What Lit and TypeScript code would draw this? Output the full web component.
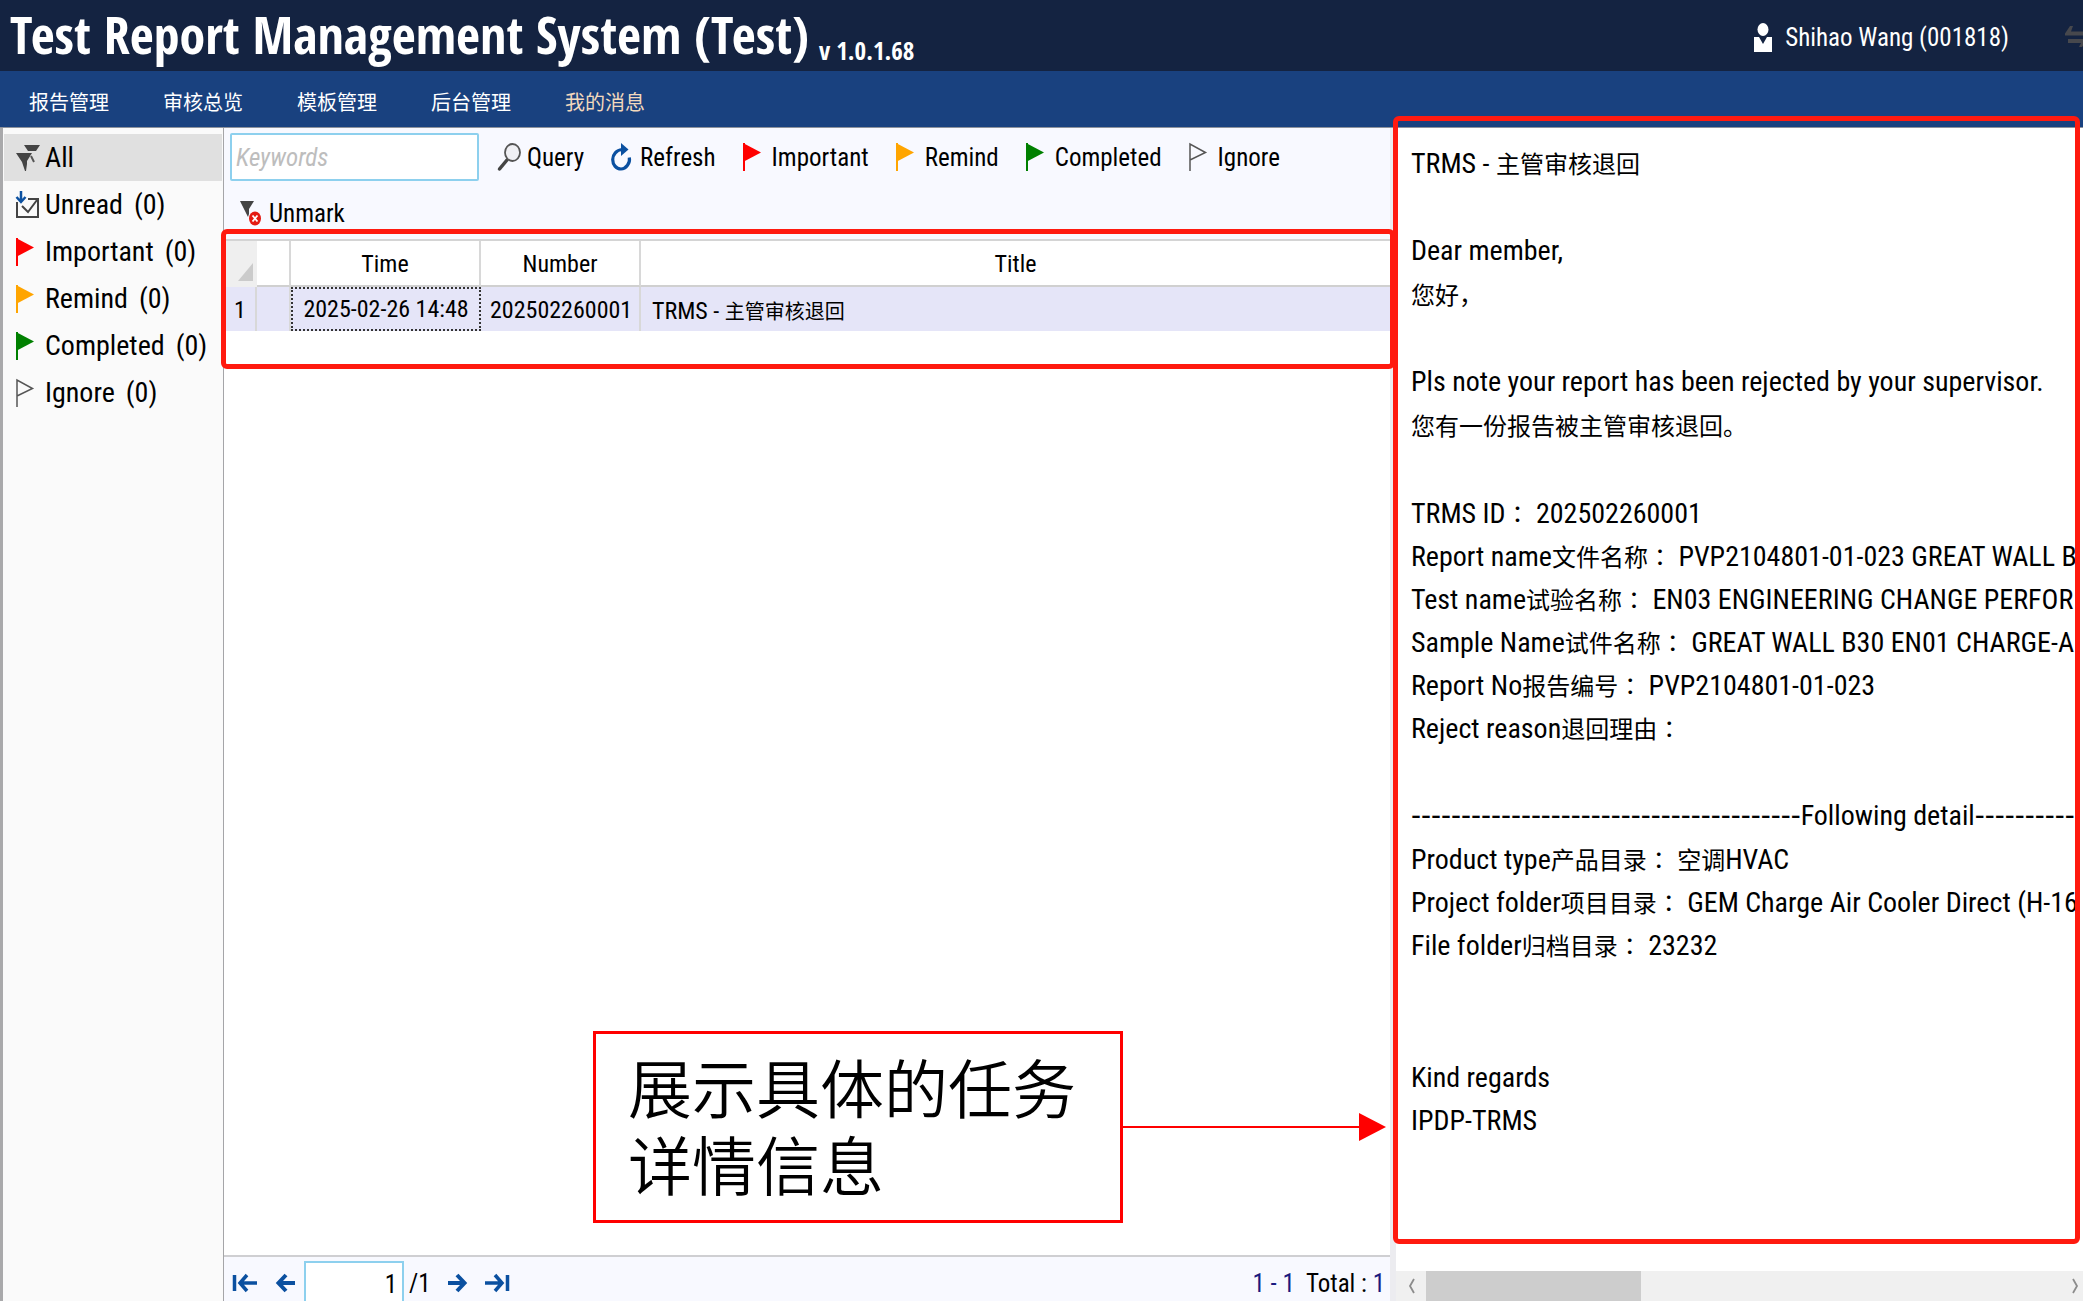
import { LitElement, html, css, svg, nothing, type TemplateResult } from "lit";
import { customElement, property } from "lit/decorators.js";
import { classMap } from "lit/directives/class-map.js";

/** Sets runs of Chinese at their own, smaller size beside the Latin text. */
const mixed = (text: string) =>
  text
    .split(/([\u3000-\u9fff，。]+|：)/)
    .filter((part) => part !== "")
    .map((part) =>
      part === "："
        ? html`<span class="zh colon">：</span>`
        : /[\u3000-\u9fff，。]/.test(part)
          ? html`<span class="zh">${part}</span>`
          : part
    );

const flag = (fill: string) => svg`
  <path d="M1 0v28" stroke=${fill} stroke-width="2" fill="none"/>
  <path d="M0 0l18 9.500L0 19z" fill=${fill}/>`;

const icons: Record<string, { w: number; h: number; body: TemplateResult | unknown }> = {
  all: {
    w: 24, h: 26,
    body: svg`<path d="M8 0h16l-4 6H12z" fill="#444"/>
      <path d="M0 8h16l-5 8v3l-1 7H9L6 17z" fill="#444"/>
      <path d="M15 11l3 6" stroke="#555" stroke-width="2" fill="none"/>`,
  },
  unread: {
    w: 24, h: 28,
    body: svg`<path d="M1 11v15h21V8H12" fill="none" stroke="#444" stroke-width="2"/>
      <path d="M6 15l6 6L21 9" fill="none" stroke="#444" stroke-width="2"/>
      <path d="M5 0v9M0.500 6L5 11l4.500-5" fill="none" stroke="#0b50a0" stroke-width="2.500"/>`,
  },
  important: { w: 18, h: 28, body: flag("#ff0000") },
  remind: { w: 18, h: 28, body: flag("#ffa500") },
  completed: { w: 18, h: 28, body: flag("#008000") },
  ignore: {
    w: 18, h: 28,
    body: svg`<path d="M1 28V1l15.500 8.500L1 17" fill="none" stroke="#555" stroke-width="1.500"/>`,
  },
  query: {
    w: 23, h: 28,
    body: svg`<path d="M9 17L1.500 26" stroke="#444" stroke-width="3.500" stroke-linecap="round"/>
      <ellipse cx="14.500" cy="9.500" rx="7.500" ry="8.500" fill="#f0f0f4" stroke="#555" stroke-width="1.800"/>`,
  },
  refresh: {
    w: 21, h: 28,
    body: svg`<path d="M18.300 14.500C19.500 20 15 26 10 26S1.700 21.500 1.700 16.500 5.500 7 11 6.500" fill="none" stroke="#0b50a0" stroke-width="3.200"/>
      <path d="M10 0l7.500 6.500L10 13z" fill="#0b50a0"/>`,
  },
  unmark: {
    w: 21, h: 25,
    body: svg`<path d="M0 0h14L9 8v5l-1 3L5 10z" fill="#444"/>
      <ellipse cx="15" cy="17.500" rx="6" ry="7" fill="#e41b13"/>
      <path d="M12.500 14.500l5 6M17.500 14.500l-5 6" stroke="#fff" stroke-width="1.800"/>`,
  },
  user: {
    w: 20, h: 29,
    body: svg`<ellipse cx="10" cy="6.500" rx="5.500" ry="6.500" fill="#fff"/>
      <path d="M1 14h5l4 7 4-7h5v15H1z" fill="#fff"/>`,
  },
  swap: {
    w: 26, h: 22,
    body: svg`<path d="M0 7.500L5 0h3L6 5.500h18v4H0z" fill="#47484d"/>
      <path d="M3 13h20l-6 8h-3l2-4H3z" fill="#47484d"/>`,
  },
  first: {
    w: 24, h: 18,
    body: svg`<path d="M1.500 1v16M24 9H8M14 1L7 9l7 8" fill="none" stroke="#0b50a0" stroke-width="3.500"/>`,
  },
  prev: {
    w: 19, h: 18,
    body: svg`<path d="M19 9H3M10 1L2.500 9l7.500 8" fill="none" stroke="#0b50a0" stroke-width="4"/>`,
  },
  next: {
    w: 19, h: 18,
    body: svg`<path d="M0 9h16M9 1l7.500 8L9 17" fill="none" stroke="#0b50a0" stroke-width="4"/>`,
  },
  last: {
    w: 24, h: 18,
    body: svg`<path d="M22.500 1v16M0 9h16M10 1l7 8-7 8" fill="none" stroke="#0b50a0" stroke-width="3.500"/>`,
  },
  left: {
    w: 8, h: 16,
    body: svg`<path d="M6 1L2 8l4 7" fill="none" stroke="#8c8c8c" stroke-width="1.800"/>`,
  },
  right: {
    w: 8, h: 16,
    body: svg`<path d="M2 1l4 7-4 7" fill="none" stroke="#8c8c8c" stroke-width="1.800"/>`,
  },
};

const icon = (name: string) => {
  const i = icons[name];
  return html`<svg class="icon" width=${i.w} height=${i.h} viewBox="0 0 ${i.w} ${i.h}" aria-hidden="true">${i.body}</svg>`;
};

const shared = css`
  * { box-sizing: border-box; }
  :host {
    font-family: "Roboto Condensed", "Noto Sans CJK SC", "Noto Sans", sans-serif;
    color: #000;
  }
  button, input { font: inherit; color: inherit; margin: 0; }
  button { background: none; border: 0; padding: 0; text-align: left; white-space: nowrap; cursor: pointer; }
  .icon { display: block; flex: none; overflow: visible; }
  .zh { font-family: "Noto Sans CJK SC", sans-serif; }
  .colon { font-family: "Noto Sans CJK TC", sans-serif; }
`;

@customElement("trms-header")
class TrmsHeader extends LitElement {
  static styles = [shared, css`
    :host { display: block; color: #fff; }
    .bar {
      display: flex; align-items: center; justify-content: space-between;
      height: 71px; padding-left: 10px; background: #142341; overflow: hidden;
    }
    .brand { display: flex; align-items: flex-end; gap: 10px; padding-bottom: 4px; }
    h1 {
      margin: 0; font: bold 52px/64px "Open Sans Condensed", "Roboto Condensed", sans-serif;
      white-space: nowrap;
    }
    .version { font: bold 25px/32px "Open Sans Condensed", "Roboto Condensed", sans-serif; }
    .account { display: flex; align-items: center; padding-top: 3px; font-size: 25px; }
    .account .name { margin: 0 56px 0 12px; white-space: nowrap; }
    .swap { width: 18px; overflow: hidden; }
    nav { display: flex; gap: 54px; height: 57px; padding-left: 29px; background: #19417f; border-bottom: 1px solid #8d929c; }
    nav a { color: #fff; text-decoration: none; font-size: 20px; line-height: 62px; white-space: nowrap; }
    nav a.current { color: #f3d9bd; }
  `];
  render() {
    const items = ["报告管理", "审核总览", "模板管理", "后台管理", "我的消息"];
    return html`
      <header class="bar">
        <div class="brand"><h1>Test Report Management System (Test)</h1><span class="version">v 1.0.1.68</span></div>
        <div class="account">
          ${icon("user")}<span class="name">Shihao Wang (001818)</span>
          <button class="swap" aria-label="Switch user">${icon("swap")}</button>
        </div>
      </header>
      <nav>${items.map((t, i) => html`<a href="#" class=${classMap({ zh: true, current: i === 4 })}>${t}</a>`)}</nav>`;
  }
}

@customElement("trms-folders")
class TrmsFolders extends LitElement {
  static styles = [shared, css`
    :host {
      display: block; background: #fafafa; padding: 6px 1px 0;
      border-left: 3px solid #a9a9ab; border-right: 1px solid #a5a5a8;
    }
    ul { margin: 0; padding: 0; list-style: none; }
    button {
      display: flex; align-items: center; width: 100%; height: 47px;
      padding-left: 12px; font-size: 28px;
    }
    button.active { background: #e0e0e0; }
    .slot { width: 29px; flex: none; }
    .count { margin-left: 11px; }
  `];
  render() {
    const rows = [
      ["all", "All"], ["unread", "Unread", "(0)"], ["important", "Important", "(0)"],
      ["remind", "Remind", "(0)"], ["completed", "Completed", "(0)"], ["ignore", "Ignore", "(0)"],
    ];
    return html`<ul>${rows.map(([k, t, n], i) => html`
      <li><button class=${classMap({ active: i === 0 })}><span class="slot">${icon(k)}</span><span>${t}</span>${n ? html`<span class="count">${n}</span>` : nothing}</button></li>`)}</ul>`;
  }
}

@customElement("trms-toolbar")
class TrmsToolbar extends LitElement {
  static styles = [shared, css`
    :host {
      display: flex; flex-wrap: wrap; align-items: center; column-gap: 27px; row-gap: 8px;
      height: 111px; padding: 5px 0 0 6px; background: #f8f9ff; align-content: flex-start;
    }
    input {
      width: 249px; height: 48px; padding: 0 4px; margin-right: -8px; font-size: 25px;
      border: 2px solid #8dd0ee; border-radius: 2px; background: #fff; outline: none;
    }
    input::placeholder { color: #bdbdbd; font-style: italic; }
    button { display: flex; align-items: center; font-size: 25px; height: 48px; }
    .slot { width: 29px; flex: none; }
    .second { margin-left: 10px; }
  `];
  render() {
    const actions = [
      ["query", "Query"], ["refresh", "Refresh"], ["important", "Important"], ["remind", "Remind"],
      ["completed", "Completed"], ["ignore", "Ignore"], ["unmark", "Unmark"],
    ];
    return html`
      <input type="text" placeholder="Keywords" aria-label="Keywords" />
      ${actions.map(([k, t]) => html`
        <button class=${classMap({ second: k === "unmark" })}><span class="slot">${icon(k)}</span>${t}</button>`)}`;
  }
}

@customElement("trms-table")
class TrmsTable extends LitElement {
  static styles = [shared, css`
    :host { display: block; background: #fff; font-size: 24px; }
    table { width: 100%; border-collapse: separate; border-spacing: 0; table-layout: fixed; border-top: 2px solid #d4d4d4; }
    th, td { padding: 0; overflow: hidden; white-space: nowrap; border-right: 2px solid #d8d8d8; }
    th:last-child, td:last-child { border-right: 0; }
    th { height: 46px; padding-top: 2px; font-weight: normal; border-bottom: 2px solid #d0d0d0; }
    th.corner { background: #efefef; border: 0; vertical-align: bottom; }
    .corner svg { display: block; margin: 0 4px 6px auto; }
    td { height: 44px; background: #e5e5f8; padding: 2px 0 0 9px; }
    td.index { padding-left: 10px; }
    td.focus { border: 2px dotted #333; text-align: center; padding: 0; }
    td:last-child { padding-left: 11px; }
    .c0 { width: 33px; } .c1 { width: 34px; } .c2 { width: 190px; } .c3 { width: 160px; }
    .zh { font-size: 20px; }
  `];
  render() {
    return html`<table>
      <colgroup><col class="c0" /><col class="c1" /><col class="c2" /><col class="c3" /><col /></colgroup>
      <thead><tr>
        <th class="corner" aria-label="Select all"><svg width="15" height="18" viewBox="0 0 15 18"><path d="M15 0v18H0z" fill="#cbcbcb"/></svg></th>
        <th aria-label="Mark"></th><th>Time</th><th>Number</th><th>Title</th>
      </tr></thead>
      <tbody><tr>
        <td class="index">1</td><td></td><td class="focus">2025-02-26 14:48</td>
        <td>202502260001</td><td>${mixed("TRMS - 主管审核退回")}</td>
      </tr></tbody>
    </table>`;
  }
}

@customElement("trms-pager")
class TrmsPager extends LitElement {
  static styles = [shared, css`
    :host {
      display: flex; align-items: flex-start; height: 46px; padding: 4px 5px 0 9px;
      background: #f8f9ff; border-top: 2px solid #cfcfd2; font-size: 25px; line-height: 46px; overflow: hidden;
    }
    button { display: flex; align-items: center; height: 44px; }
    .prev { margin-left: 19px; }
    .next { margin-left: 17px; }
    .last { margin-left: 18px; }
    input {
      width: 100px; height: 50px; margin: 0 5px 0 9px; padding: 0 5px 4px 0; text-align: right;
      border: 2px solid #8dd0ee; background: #fff; outline: none;
    }
    .total { margin-left: auto; white-space: pre; }
    .num { color: #1a1a80; }
  `];
  render() {
    return html`
      <button aria-label="First page">${icon("first")}</button>
      <button class="prev" aria-label="Previous page">${icon("prev")}</button>
      <input type="text" .value=${"1"} aria-label="Page" /><span>/1</span>
      <button class="next" aria-label="Next page">${icon("next")}</button>
      <button class="last" aria-label="Last page">${icon("last")}</button>
      <span class="total"><span class="num">1 - 1</span>  Total : <span class="num">1</span></span>`;
  }
}

@customElement("trms-message")
class TrmsMessage extends LitElement {
  @property({ attribute: false }) lines: string[] = [];
  static styles = [shared, css`
    :host { display: flex; flex-direction: column; position: relative; min-width: 0; background: #fff; }
    .text {
      flex: 1; min-height: 0; padding: 13px 0 0 15px; margin-right: 6px;
      overflow: hidden; font-size: 28px;
    }
    p { margin: 0; height: 43px; line-height: 43px; white-space: pre; }
    p.blank { height: 45px; }
    .zh { font-size: 24px; }
    .dash { font: 30px "Liberation Sans", sans-serif; }
    .scroll { display: flex; align-items: center; height: 30px; background: #f0f0f0; padding: 0 4px 0 12px; }
    .thumb { width: 32%; height: 100%; margin-left: 10px; background: #cdcdcd; }
    .scroll .icon:last-child { margin-left: auto; }
  `];
  render() {
    return html`
      <div class="text">${this.lines.map((l) =>
        l === ""
          ? html`<p class="blank"></p>`
          : html`<p>${l.split(/(-{5,})/).map((s) => (s.startsWith("-----") ? html`<span class="dash">${s}</span>` : s ? mixed(s) : nothing))}</p>`)}</div>
      <div class="scroll">${icon("left")}<div class="thumb"></div>${icon("right")}</div>`;
  }
}

const message = [
  "TRMS - 主管审核退回", "", "Dear member,", "您好，", "",
  "Pls note your report has been rejected by your supervisor.", "您有一份报告被主管审核退回。", "",
  "TRMS ID： 202502260001",
  "Report name文件名称： PVP2104801-01-023 GREAT WALL B",
  "Test name试验名称： EN03 ENGINEERING CHANGE PERFOR",
  "Sample Name试件名称： GREAT WALL B30 EN01 CHARGE-A",
  "Report No报告编号： PVP2104801-01-023",
  "Reject reason退回理由：", "",
  "-".repeat(39) + "Following detail" + "-".repeat(10),
  "Product type产品目录： 空调HVAC",
  "Project folder项目目录： GEM Charge Air Cooler Direct (H-16",
  "File folder归档目录： 23232", "", "",
  "Kind regards", "IPDP-TRMS",
];

@customElement("app-root")
class AppRoot extends LitElement {
  static styles = [shared, css`
    :host { display: flex; flex-direction: column; min-height: 100vh; background: #fff; overflow: hidden; }
    .body { flex: 1; display: grid; grid-template-columns: 224px minmax(0, 1172fr) minmax(0, 687fr); }
    .list { position: relative; display: flex; flex-direction: column; border-right: 6px solid #ececf0; }
    .space { flex: 1; }
    .mark { position: absolute; border: 5px solid #ff1a0f; border-radius: 6px; pointer-events: none; }
    .mark.rows { top: 101px; left: -3px; right: -5px; height: 140px; }
    .detail { position: relative; display: grid; }
    .mark.mail { top: -12px; left: -3px; right: 3px; bottom: 57px; }
    .callout { position: absolute; right: 4px; bottom: 78px; display: flex; align-items: center; }
    .note {
      margin: 0; border: 3px solid #f00; background: #fff; padding: 13px 44px 19px 32px;
      font: 350 64px/77px "Noto Sans CJK SC", sans-serif; white-space: nowrap;
    }
    .arrow { display: block; }
  `];
  render() {
    return html`
      <trms-header></trms-header>
      <main class="body">
        <trms-folders></trms-folders>
        <section class="list">
          <trms-toolbar></trms-toolbar>
          <trms-table></trms-table>
          <div class="space"></div>
          <trms-pager></trms-pager>
          <div class="mark rows"></div>
          <div class="callout">
            <p class="note">展示具体的任务<br />详情信息</p>
            <svg class="arrow" width="263" height="28" viewBox="0 0 263 28" aria-hidden="true">
              <path d="M0 14h240" stroke="#f00" stroke-width="2"/><path d="M236 0l27 14-27 14z" fill="#f00"/>
            </svg>
          </div>
        </section>
        <section class="detail">
          <trms-message .lines=${message}></trms-message>
          <div class="mark mail"></div>
        </section>
      </main>`;
  }
}
